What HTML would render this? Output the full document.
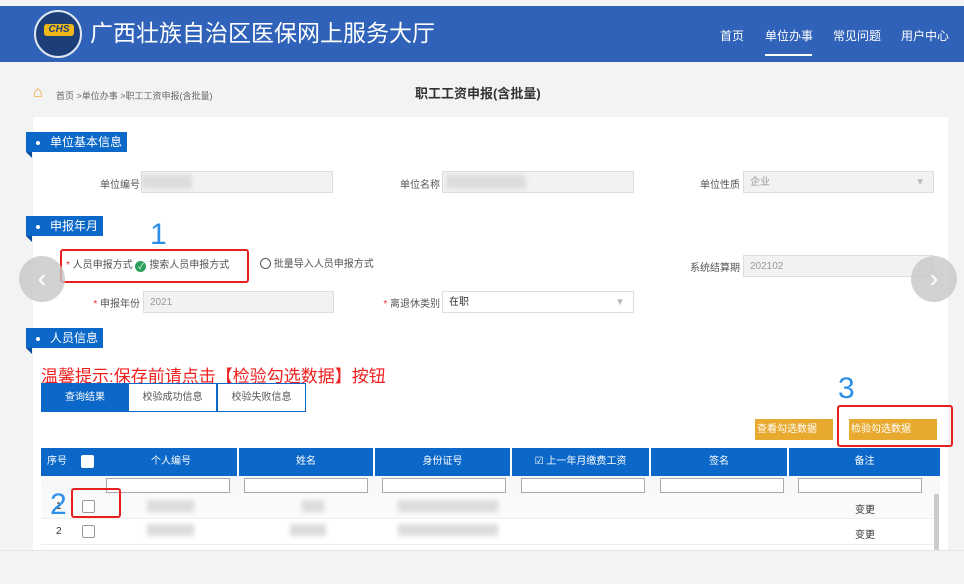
<!DOCTYPE html>
<html><head><meta charset="utf-8"><style>
*{margin:0;padding:0;box-sizing:border-box}
body{width:964px;height:584px;background:#f3f3f3;font-family:"Liberation Sans","Noto Sans CJK SC",sans-serif;position:relative;overflow:hidden;font-size:10px;color:#333}
.a{position:absolute}
.hdr{left:0;top:6px;width:964px;height:56px;background:#2f62b8}
.nav{color:#fff;font-size:12px;top:27px}
.card{left:33px;top:117px;width:915px;height:433px;background:#fff}
.tag{background:#0b68c9;color:#fff;font-size:12px;height:20px;line-height:20px;padding-left:10px;left:26px}
.tag:before{content:"";display:inline-block;width:4px;height:4px;background:#fff;border-radius:50%;margin-right:10px;vertical-align:middle}
.tag:after{content:"";position:absolute;left:0;top:20px;border-top:6px solid #0a4f9a;border-left:6px solid transparent}
.lbl{font-size:10px;color:#555;text-align:right}
.inp{background:#f2f2f2;border:1px solid #ddd;height:22px;font-size:10px;color:#999;line-height:22px;padding-left:6px}
.red{color:#e53333}
.blur{background:#ddd;filter:blur(2px)}
.th{top:448px;height:28px;background:#0b68c9;color:#fff;font-size:10px;line-height:28px;text-align:center}
.fi{top:478px;height:15px;border:1px solid #aaa;background:#fff}
.cb{width:13px;height:13px;border:1px solid #999;background:#fff;border-radius:2px}
.btn{background:#e8a92f;color:#fff;font-size:10px;height:21px;line-height:21px;padding-left:2px}
.box{border:2px solid #e82020;border-radius:3px}
.num{color:#2e8fe8;font-size:30px;font-family:"Liberation Sans",sans-serif}
.circ{width:46px;height:46px;border-radius:50%;background:#c8c8c8;color:#fff;font-size:26px;text-align:center;line-height:44px;opacity:.8}
</style></head><body>
<div class="a hdr"></div>
<div class="a" style="left:34px;top:10px;width:48px;height:48px;border-radius:50%;background:#1c3f7a;border:2px solid #dfe6f0"></div>
<div class="a" style="left:44px;top:24px;width:30px;height:12px;background:#f0b818;border-radius:3px;color:#1c3f7a;font-size:10px;font-weight:bold;font-style:italic;line-height:12px;text-align:center">CHS</div>
<div class="a" style="left:90px;top:17px;color:#fff;font-size:23px;line-height:32px">广西壮族自治区医保网上服务大厅</div>
<div class="a nav" style="left:720px">首页</div>
<div class="a nav" style="left:765px">单位办事</div>
<div class="a" style="left:765px;top:54px;width:47px;height:2px;background:#fff"></div>
<div class="a nav" style="left:833px">常见问题</div>
<div class="a nav" style="left:901px">用户中心</div>

<div class="a" style="left:33px;top:84px;color:#f0a030;font-size:16px">⌂</div>
<div class="a" style="left:56px;top:89px;font-size:9px;color:#666">首页 &gt;单位办事 &gt;职工工资申报(含批量)</div>
<div class="a" style="left:415px;top:83px;font-size:13px;font-weight:bold;color:#333">职工工资申报(含批量)</div>

<div class="a card"></div>
<div class="a tag" style="top:132px;width:101px">单位基本信息</div>
<div class="a lbl" style="left:80px;top:176px;width:60px">单位编号</div>
<div class="a inp" style="left:141px;top:171px;width:192px"></div>
<div class="a blur" style="left:142px;top:175px;width:50px;height:14px"></div>
<div class="a lbl" style="left:380px;top:176px;width:60px">单位名称</div>
<div class="a inp" style="left:442px;top:171px;width:192px"></div>
<div class="a blur" style="left:446px;top:175px;width:80px;height:14px"></div>
<div class="a lbl" style="left:680px;top:176px;width:60px">单位性质</div>
<div class="a inp" style="left:743px;top:171px;width:191px">企业<span style="float:right;margin-right:8px;color:#bbb">▼</span></div>

<div class="a tag" style="top:216px;width:77px">申报年月</div>
<div class="a" style="left:66px;top:256px;font-size:10px;color:#555"><span class="red">*</span> 人员申报方式 <span style="display:inline-block;width:11px;height:11px;border-radius:50%;background:#2ba05a;color:#fff;font-size:8px;line-height:11px;text-align:center;vertical-align:-1px">✓</span> 搜索人员申报方式</div>
<div class="a" style="left:260px;top:255px;font-size:10px;color:#555"><span style="display:inline-block;width:11px;height:11px;border-radius:50%;border:1px solid #555;vertical-align:-2px"></span> 批量导入人员申报方式</div>
<div class="a box" style="left:60px;top:249px;width:189px;height:34px"></div>
<div class="a num" style="left:150px;top:218px">1</div>
<div class="a lbl" style="left:670px;top:259px;width:70px">系统结算期</div>
<div class="a inp" style="left:743px;top:255px;width:191px">202102</div>
<div class="a circ" style="left:19px;top:256px">‹</div>
<div class="a circ" style="left:911px;top:256px">›</div>

<div class="a lbl" style="left:80px;top:295px;width:60px"><span class="red">*</span> 申报年份</div>
<div class="a inp" style="left:143px;top:291px;width:191px">2021</div>
<div class="a lbl" style="left:370px;top:295px;width:70px"><span class="red">*</span> 离退休类别</div>
<div class="a inp" style="left:442px;top:291px;width:192px;background:#fff;color:#333">在职<span style="float:right;margin-right:8px;color:#bbb">▼</span></div>

<div class="a tag" style="top:328px;width:77px">人员信息</div>
<div class="a" style="left:41px;top:362px;color:#f02020;font-size:17px">温馨提示:保存前请点击【检验勾选数据】按钮</div>
<div class="a" style="left:41px;top:383px;width:88px;height:29px;background:#0b68c9;color:#fff;text-align:center;line-height:29px">查询结果</div>
<div class="a" style="left:129px;top:383px;width:88px;height:29px;border:1px solid #0b68c9;border-left:none;text-align:center;line-height:27px;color:#555">校验成功信息</div>
<div class="a" style="left:217px;top:383px;width:89px;height:29px;border:1px solid #0b68c9;text-align:center;line-height:27px;color:#555">校验失败信息</div>

<div class="a btn" style="left:755px;top:419px;width:78px">查看勾选数据</div>
<div class="a btn" style="left:849px;top:419px;width:88px">检验勾选数据</div>
<div class="a box" style="left:837px;top:405px;width:116px;height:42px"></div>
<div class="a num" style="left:838px;top:372px">3</div>

<div class="a th" style="left:41px;width:64px;text-align:left;padding-left:6px">序号</div>
<div class="a cb" style="left:81px;top:455px;border-color:#fff"></div>
<div class="a th" style="left:105px;width:132px">个人编号</div>
<div class="a th" style="left:239px;width:134px">姓名</div>
<div class="a th" style="left:375px;width:135px">身份证号</div>
<div class="a th" style="left:512px;width:137px">☑ 上一年月缴费工资</div>
<div class="a th" style="left:651px;width:136px">签名</div>
<div class="a th" style="left:789px;width:151px">备注</div>
<div class="a" style="left:41px;top:476px;width:899px;height:18px;background:#f7f8fa"></div>
<div class="a fi" style="left:106px;width:124px"></div>
<div class="a fi" style="left:244px;width:124px"></div>
<div class="a fi" style="left:382px;width:124px"></div>
<div class="a fi" style="left:521px;width:124px"></div>
<div class="a fi" style="left:660px;width:124px"></div>
<div class="a fi" style="left:798px;width:124px"></div>
<div class="a" style="left:41px;top:494px;width:893px;height:25px;background:#f9fafc;border-bottom:1px solid #eee"></div>
<div class="a" style="left:41px;top:519px;width:893px;height:26px;background:#fff;border-bottom:1px solid #eee"></div>
<div class="a" style="left:934px;top:494px;width:5px;height:56px;background:#ccc"></div>
<div class="a" style="left:56px;top:501px">1</div>
<div class="a" style="left:56px;top:526px">2</div>
<div class="a cb" style="left:82px;top:500px"></div>
<div class="a cb" style="left:82px;top:525px"></div>
<div class="a box" style="left:71px;top:488px;width:50px;height:30px"></div>
<div class="a num" style="left:50px;top:488px">2</div>
<div class="a blur" style="left:147px;top:500px;width:47px;height:12px"></div>
<div class="a blur" style="left:147px;top:524px;width:47px;height:12px"></div>
<div class="a blur" style="left:302px;top:500px;width:22px;height:12px"></div>
<div class="a blur" style="left:290px;top:524px;width:36px;height:12px"></div>
<div class="a blur" style="left:398px;top:500px;width:100px;height:12px"></div>
<div class="a blur" style="left:398px;top:524px;width:100px;height:12px"></div>
<div class="a" style="left:855px;top:501px">变更</div>
<div class="a" style="left:855px;top:526px">变更</div>
<div class="a" style="left:0;top:550px;width:964px;height:34px;background:#f3f3f5;border-top:1px solid #e6e6e6"></div>
</body></html>
